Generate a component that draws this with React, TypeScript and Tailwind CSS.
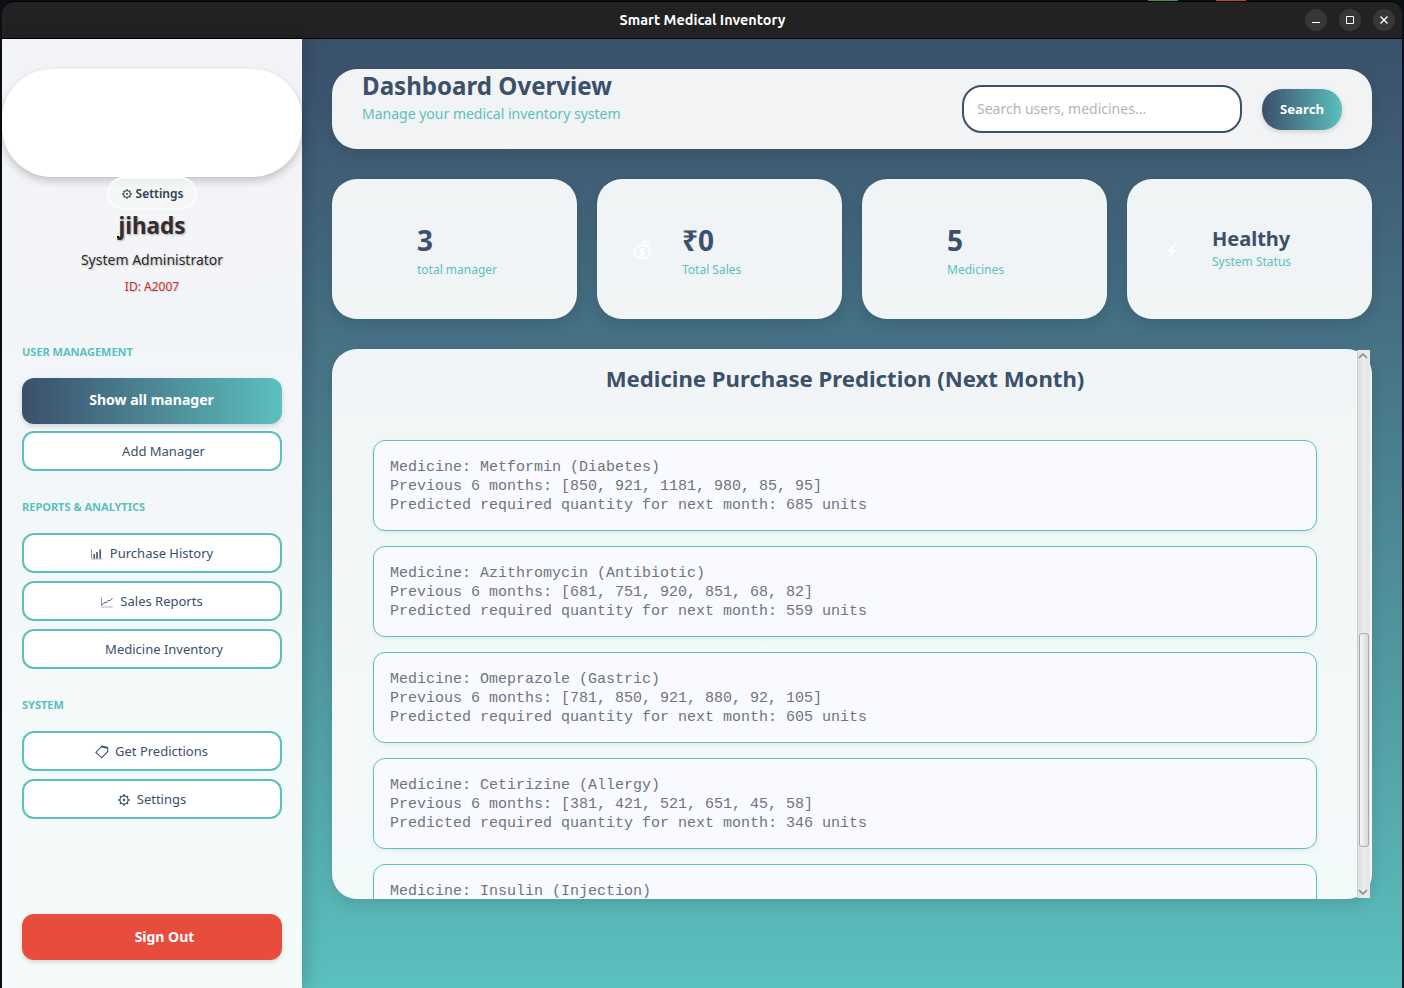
import React from "react";

type IconName = "bars" | "trend" | "clip" | "gear";

const Gear = ({ size }: { size: number }) => (
  <svg width={size} height={size} viewBox="0 0 20 20" fill="none" stroke="currentColor">
    <circle cx="10" cy="10" r="6.8" strokeWidth="2" />
    <circle cx="10" cy="10" r="2" fill="currentColor" stroke="none" />
    <path
      d="M10 3.500V.5M10 16.500v3M3.500 10h-3M16.500 10h3M5.400 5.400L3.300 3.300M14.600 5.400l2.100-2.100M5.400 14.600l-2.100 2.100M14.600 14.600l2.100 2.100"
      strokeWidth="2.800"
    />
  </svg>
);

const Icon = ({ name }: { name: IconName }) => {
  if (name === "gear") return <Gear size={12} />;
  if (name === "bars")
    return (
      <svg width="12" height="12" viewBox="0 0 12 12" fill="none">
        <path d="M.5 1.500V11" stroke="#8994a5" />
        <path d="M0 11h11.500" stroke="#d5dae1" strokeWidth="2" />
        <path d="M3.200 10.500V6M6 10.500V4M9.200 10.500V1.500" stroke="#4a5d77" strokeWidth="1.700" />
      </svg>
    );
  if (name === "trend")
    return (
      <svg width="12" height="12" viewBox="0 0 12 12" fill="none">
        <path d="M.5 1.500V11" stroke="#8994a5" />
        <path d="M0 11h12" stroke="#d5dae1" strokeWidth="2" />
        <path d="M1 9l2-2.500 2 .5 2-2.500 2 .3L11.500 2" stroke="#3a506b" strokeWidth=".9" />
      </svg>
    );
  return (
    <svg width="14" height="14" viewBox="0 0 14 14" fill="none" stroke="#3a506b" strokeWidth="1.100">
      <path d="M6 2L.9 7.500l5.900 5.300 5.900-6.300V2.600L7 1z" />
      <path d="M6.200 1.500l6 1.400" strokeWidth="1.600" />
    </svg>
  );
};

const NavButton = ({ label, icon, nudge = "" }: { label: string; icon?: IconName; nudge?: string }) => (
  <button className="flex h-10 w-full items-center justify-center gap-[7px] rounded-xl border-2 border-[#5bc0be] bg-white pt-px text-[13px] text-[#3a506b]">
    {icon && <Icon name={icon} />}
    <span className={nudge}>{label}</span>
  </button>
);

const Section = ({ title }: { title: string }) => (
  <h3 className="h-4 text-[11px] leading-4 font-bold text-[#5bc0be]">{title}</h3>
);

const Sidebar = () => (
  <aside className="relative z-10 flex w-[300px] shrink-0 flex-col bg-gradient-to-b from-[#f2f3f6] to-[#f5fbfb] pt-[30px] shadow-[3px_0_18px_rgba(0,0,0,0.2)]">
    <div className="h-[108px] shrink-0 rounded-[50px] bg-white shadow-[0_4px_8px_rgba(0,0,0,0.2)]" />
    <div className="flex flex-col items-center">
      <button className="flex h-[33px] w-[90px] items-center justify-center gap-1 rounded-full border-2 border-white/70 bg-gradient-to-b from-[#eceeee] via-[#f5f7f7] via-30% to-[#f5f7f7] text-xs font-semibold text-[#2c3e50]">
        <Gear size={10} />
        <span className="-mr-px">Settings</span>
      </button>
      <div className="relative h-8 text-[22.500px] leading-[31px] font-bold text-[#352c2e] [text-shadow:1px_1px_2px_rgba(0,0,0,0.3)]">
        jihads
        <span className="absolute bottom-[4px] -left-px size-[2px] bg-black" />
      </div>
      <div className="mt-2 h-5 text-sm leading-5 text-[#2f2a2a] [text-shadow:1px_1px_2px_rgba(0,0,0,0.25)]">System Administrator</div>
      <div className="mt-[9px] h-4 text-xs leading-4 text-[#c92a2a] [text-shadow:1px_1px_1px_rgba(0,0,0,0.15)]">ID: A2007</div>
    </div>
    <nav className="mt-[49px] flex flex-col px-5">
      <Section title="USER MANAGEMENT" />
      <button className="mt-[18px] h-[46px] rounded-xl bg-gradient-to-r from-[#3a506b] to-[#5bc0be] pr-px pb-[2px] text-[14.050px] font-bold text-white shadow-[0_2px_5px_rgba(0,0,0,0.15)]">Show all manager</button>
      <div className="mt-[7px]">
        <NavButton label="Add Manager" nudge="pl-[23px]" />
      </div>
      <div className="mt-7"><Section title="REPORTS & ANALYTICS" /></div>
      <div className="mt-[18px] flex flex-col gap-2">
        <NavButton icon="bars" label="Purchase History" />
        <NavButton icon="trend" label="Sales Reports" />
        <NavButton label="Medicine Inventory" nudge="pl-6" />
      </div>
      <div className="mt-7"><Section title="SYSTEM" /></div>
      <div className="mt-[18px] flex flex-col gap-2">
        <NavButton icon="clip" label="Get Predictions" nudge="-ml-px pr-px" />
        <NavButton icon="gear" label="Settings" />
      </div>
      <button className="mt-[95px] h-[46px] rounded-xl bg-[#e74c3c] pl-[25px] text-sm font-bold text-white shadow-[0_2px_5px_rgba(0,0,0,0.15)]">Sign Out</button>
    </nav>
  </aside>
);

const panel = "rounded-[25px] bg-white/93 shadow-[0_5px_15px_rgba(0,0,0,0.12)]";

const MoneyBag = () => (
  <svg width="18" height="20" viewBox="0 0 18 20" fill="none" stroke="white" strokeWidth="1.3">
    <path d="M10 6C4 7 1 11 1 14.5 1 18 4 19 9 19s8-1 8-4.500C17 11 15 7 12 6z" />
    <path d="M10 6L11 1.500l2.500 1 3 .5-1.500 3-2 .5" />
    <path d="M12 10.500c-2-1-5-.5-5 1.300 0 2 4.500 1 4.500 2.800 0 1.700-3.500 1.700-5 .6M9.700 9l-1 8" />
  </svg>
);

const Bolt = () => (
  <svg className="mt-1" width="12" height="16" viewBox="0 0 12 16" fill="white">
    <path d="M10.500 0L1 8l4.500.8L.5 15.500 11 7.500 6.200 6.600z" />
  </svg>
);

const stats = [
  { value: "3", label: "total manager" },
  { value: "₹0", label: "Total Sales", icon: <MoneyBag /> },
  { value: "5", label: "Medicines" },
  { value: "Healthy", label: "System Status", icon: <Bolt />, small: true },
];

const predictions = [
  { name: "Metformin (Diabetes)", months: [850, 921, 1181, 980, 85, 95], qty: 685 },
  { name: "Azithromycin (Antibiotic)", months: [681, 751, 920, 851, 68, 82], qty: 559 },
  { name: "Omeprazole (Gastric)", months: [781, 850, 921, 880, 92, 105], qty: 605 },
  { name: "Cetirizine (Allergy)", months: [381, 421, 521, 651, 45, 58], qty: 346 },
  { name: "Insulin (Injection)" },
];

const Scrollbar = () => (
  <div className="absolute top-px right-[2px] bottom-px flex w-[13px] flex-col items-center border-l border-[#cfcfcf] bg-gradient-to-r from-[#dedede] via-[#ececec] to-[#e6e6e6]">
    <svg className="mt-[3px] mr-[2px] shrink-0" width="10" height="6" viewBox="0 0 10 6" fill="none" stroke="#858585" strokeWidth="1.5"><path d="M1 5l4-4 4 4" /></svg>
    <div className="mt-[274px] h-[214px] w-[10px] shrink-0 rounded-[3px] border border-[#aaa] bg-gradient-to-r from-[#f8f8f8] to-[#d9d9d9]" />
    <svg className="mt-auto mr-[2px] mb-[3px] shrink-0" width="10" height="6" viewBox="0 0 10 6" fill="none" stroke="#858585" strokeWidth="1.5"><path d="M1 1l4 4 4-4" /></svg>
  </div>
);

const WinButton = ({ children }: { children: React.ReactNode }) => (
  <div className="flex size-[22px] items-center justify-center rounded-full bg-[#373737]">
    <svg width="10" height="10" viewBox="0 0 10 10" fill="none" stroke="white">{children}</svg>
  </div>
);

export default function App() {
  return (
    <div className="relative h-[988px] w-[1404px] overflow-hidden bg-[#0b0f16] px-[2px] pt-px font-['Noto_Sans',sans-serif]">
      <div className="absolute top-0 left-[1148px] h-px w-[30px] bg-[#3f8f4f]" />
      <div className="absolute top-0 left-[1216px] h-px w-[30px] bg-[#b8433f]" />
      <header className="flex h-[38px] items-center rounded-t-[12px] border-t border-b border-black bg-[#222222] pr-[7px]">
        <div className="w-[98px]" />
        <h1 className="flex-1 pt-[2px] text-center font-['Ubuntu','Noto_Sans',sans-serif] text-[14.450px] font-semibold text-white">Smart Medical Inventory</h1>
        <div className="flex w-[90px] gap-3">
          <WinButton><path d="M1 7.500h8" /></WinButton>
          <WinButton><path d="M1.500 1.500h7v7h-7z" /></WinButton>
          <WinButton><path d="M1.500 1.500l7 7M8.500 1.500l-7 7" strokeWidth="1.400" /></WinButton>
        </div>
      </header>
      <div className="flex h-[949px]">
        <Sidebar />
        <main className="flex flex-1 flex-col gap-[30px] bg-gradient-to-b from-[#3a506b] to-[#5bc0be] p-[30px]">
          <section className={`${panel} flex h-20 shrink-0 items-center px-[30px]`}>
            <div className="h-20 flex-1">
              <h2 className="h-9 text-[24.100px] leading-[34px] font-bold text-[#3a506b]">Dashboard Overview</h2>
              <p className="text-sm leading-[18px] text-[#5bc0be]">Manage your medical inventory system</p>
            </div>
            <input
              placeholder="Search users, medicines..."
              className="h-12 w-[280px] rounded-[20px] border-2 border-[#3a506b] bg-white px-[13px] pb-[2px] text-sm placeholder:text-[#b4b4b4]"
            />
            <button className="ml-5 h-[41px] w-20 rounded-[20px] bg-gradient-to-r from-[#3a506b] to-[#5bc0be] pt-px text-[13.200px] font-bold text-white shadow-[0_2px_5px_rgba(0,0,0,0.15)]">Search</button>
          </section>
          <section className="grid h-[140px] shrink-0 grid-cols-4 gap-5">
            {stats.map((s) => (
              <div key={s.label} className={`${panel} flex items-center`}>
                <div className="flex w-[85px] justify-center pl-[5px]">{s.icon}</div>
                <div className={s.small ? "pb-[2px]" : ""}>
                  <div className={s.small ? "h-6 text-xl leading-6 font-bold text-[#3a506b]" : "h-[38px] text-[28px] leading-[38px] font-bold text-[#3a506b]"}>{s.value}</div>
                  <div className={s.small ? "mt-[3px] text-xs leading-4 text-[#5bc0be]" : "mt-[3px] text-xs leading-4 text-[#5bc0be]"}>{s.label}</div>
                </div>
              </div>
            ))}
          </section>
          <section className={`${panel} relative h-[550px] shrink-0`}>
            <div className="h-full overflow-hidden rounded-[25px] pt-[13px] pr-[55px] pl-[41px]">
              <h2 className="h-8 text-center text-[22.150px] leading-8 font-bold text-[#3a506b]">Medicine Purchase Prediction (Next Month)</h2>
              <div className="mt-[46px] flex flex-col gap-[15px]">
                {predictions.map((p) => (
                  <pre key={p.name} className="h-[91px] shrink-0 rounded-xl border border-[#5bc0be] bg-[#f8faff] px-4 pt-[17px] font-['Liberation_Mono',monospace] text-[15px] leading-[19px] text-[#70747a] shadow-[0_2px_4px_rgba(0,0,0,0.06)]">
                    {`Medicine: ${p.name}`}
                    {p.months &&
                      `\nPrevious 6 months: [${p.months.join(", ")}]\nPredicted required quantity for next month: ${p.qty} units`}
                  </pre>
                ))}
              </div>
            </div>
            <Scrollbar />
          </section>
        </main>
      </div>
    </div>
  );
}
